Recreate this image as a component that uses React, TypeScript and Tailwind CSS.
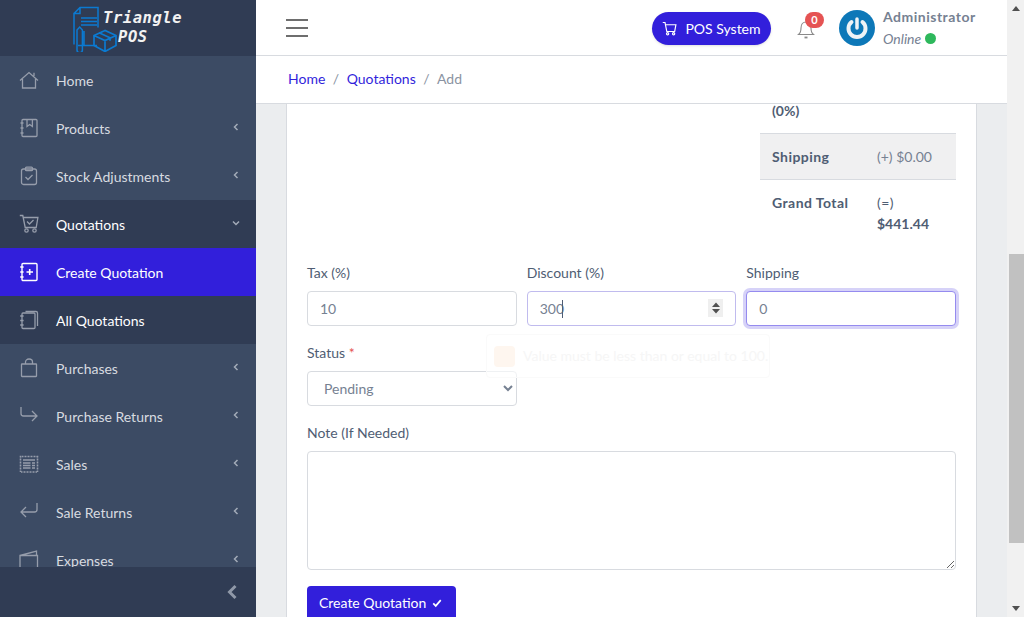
import React from "react";

const S = ({ children, className = "" }: { children: React.ReactNode; className?: string }) => (
  <svg viewBox="0 0 20 20" fill="none" stroke="currentColor" strokeWidth="1.3" className={"w-5 h-5 " + className}>
    {children}
  </svg>
);

const icons: Record<string, React.ReactNode> = {
  home: <S><path d="M1 10.500 10 2.500l9 8M3.500 9v9h13V9M15 6V2.800" /></S>,
  book: <S><rect x="3" y="1.500" width="15" height="17" rx="1" /><path d="M8 1.500v7l2.700-2 2.700 2v-7M1.500 5h3M1.500 10h3M1.500 15h3" /></S>,
  clip: <S><rect x="2.500" y="3" width="15" height="15.500" rx="2" /><rect x="6.500" y="1.200" width="7" height="3.500" rx="1" /><path d="m6.500 11 2.500 2.500 4.500-4.500" /></S>,
  cart: <S><path d="M.8 1.500h3l2.400 12h11l1.700-10H4.300" /><circle cx="7.500" cy="16.500" r="1.700" /><circle cx="15.500" cy="16.500" r="1.700" /><path d="m8 7.500 2.500 2.500 4-4" /></S>,
  plus: <S><rect x="3" y="1.500" width="15" height="17" rx="1" strokeWidth="1.400" /><path d="M7.500 10h6.500M10.700 7v6" strokeWidth="1.600" /><path d="M1.200 5h3.400M1.200 10h3.400M1.200 15h3.400" strokeWidth="1.600" /></S>,
  copies: <S><rect x="3" y="3" width="13" height="15.500" rx="1" /><path d="M6.500 1.500H17a1.500 1.500 0 0 1 1.500 1.500v13M1.200 6h3.400M1.200 10.500h3.400M1.200 15h3.400" /></S>,
  bag: <S><rect x="2.500" y="6" width="15" height="12.500" rx="0.500" /><path d="M6.500 6V4a3.500 3 0 0 1 7 0v2" /></S>,
  retR: <S><path d="M2 1v6.500a2.500 2.500 0 0 0 2.500 2.500H18M13 5l5 5-5 5" /></S>,
  news: <S><rect x="1.500" y="2.500" width="17" height="15.500" strokeWidth="1.600" strokeDasharray="1 .5" /><path d="M4 6h12M4 9h7.500M4 11.500h7.500M4 14h7.500M13 9h3M13 11.500h3M13 14h3" strokeWidth="1.400" /></S>,
  retL: <S><path d="M18 1v6.500a2.500 2.500 0 0 1-2.500 2.500H2M7 5l-5 5 5 5" /></S>,
  wallet: <S><path d="M1 5.500h17.500v14H1zM1 5.500 17.500 1.200v4" /></S>,
};

const Chevron = ({ down = false }: { down?: boolean }) => (
  <svg viewBox="0 0 10 10" className="w-[10px] h-[10px] text-[#a3abb8] mt-[-3px]" fill="none" stroke="currentColor" strokeWidth="1.500">
    {down ? <path d="m2 3.500 3 3 3-3" /> : <path d="M6.500 2 3.500 5l3 3" />}
  </svg>
);

const Item = ({ icon, label, chev, tone = "normal" }: { icon: string; label: string; chev?: "left" | "down"; tone?: "normal" | "open" | "active" }) => {
  const cls =
    tone === "active"
      ? "bg-[#321fdb] text-white"
      : tone === "open"
        ? "bg-[#303c54] text-white"
        : "text-[#d8dbe0]";
  const ic = tone === "active" ? "text-white" : "text-[#969dab]";
  return (
    <div className={"h-12 shrink-0 flex items-center pl-[19px] pr-[15px] " + cls}>
      <span className={"w-[37px] shrink-0 flex " + ic}>{icons[icon]}</span>
      <span className="flex-1 text-sm pt-[2px]">{label}</span>
      {chev && <Chevron down={chev === "down"} />}
    </div>
  );
};

const Logo = () => (
  <svg viewBox="0 0 46 46" className="w-[46px] h-[46px]" fill="none" stroke="#0b7ad1" strokeWidth="1.500">
    <path d="M2 7.500 8 1.500h18v20M8 1.500v6H2v31" />
    <path d="M9 12h16M9 15.500h16M9 19h16" />
    <path d="M6 39.500h19M12 39V25M5 38V24l2.700-3 2.700 3v20a2.700 2.700 0 0 1-5.400 0z" />
    <path d="M33 24.500l-11 5v10l11 6 11-6v-10zM22 29.500l11 5 11-5M33 34.500v11M27 26.800l11 5v3" strokeWidth="1.700" />
  </svg>
);

const Sidebar = () => (
  <aside className="w-[256px] shrink-0 h-full flex flex-col bg-[#3c4b64] overflow-hidden">
    <div className="h-14 shrink-0 bg-[#303c54] flex items-start">
      <div className="ml-[72px] mt-[6px] shrink-0"><Logo /></div>
      <div className="ml-[-16px] mt-[9px] text-[#f2f2f2] font-bold italic text-[15.500px] leading-[19px] tracking-[.55px] font-['DejaVu_Sans_Mono',monospace]">
        <div className="ml-[1px]">Triangle</div>
        <div className="ml-[16px]">POS</div>
      </div>
    </div>
    <nav className="flex-1 min-h-0 overflow-hidden">
      <Item icon="home" label="Home" />
      <Item icon="book" label="Products" chev="left" />
      <Item icon="clip" label="Stock Adjustments" chev="left" />
      <Item icon="cart" label="Quotations" chev="down" tone="open" />
      <Item icon="plus" label="Create Quotation" tone="active" />
      <Item icon="copies" label="All Quotations" tone="open" />
      <Item icon="bag" label="Purchases" chev="left" />
      <Item icon="retR" label="Purchase Returns" chev="left" />
      <Item icon="news" label="Sales" chev="left" />
      <Item icon="retL" label="Sale Returns" chev="left" />
      <Item icon="wallet" label="Expenses" chev="left" />
    </nav>
    <div className="h-[50px] shrink-0 bg-[#303c54] flex items-center justify-end pr-[17px]">
      <svg viewBox="0 0 14 16" className="w-[14px] h-4 text-[#8f98a8]" fill="none" stroke="currentColor" strokeWidth="3"><path d="M10.500 2 4.500 8l6 6" /></svg>
    </div>
  </aside>
);

const Topbar = () => (
  <header className="h-14 shrink-0 border-b border-[#d8dbe0] bg-white flex items-center pl-[30px] pr-[24px]">
    <div className="w-[22px] flex flex-col gap-[6px]">
      <span className="h-[2px] bg-[#6e6e6e]" /><span className="h-[2px] bg-[#6e6e6e]" /><span className="h-[2px] bg-[#6e6e6e]" />
    </div>
    <div className="flex-1" />
    <button className="h-[33px] w-[119px] mt-[2px] rounded-full bg-[#321fdb] text-white text-sm flex items-center justify-center gap-[8px] shadow-sm">
      <svg viewBox="0 0 20 20" className="w-[15px] h-[15px]" fill="none" stroke="currentColor" strokeWidth="1.600"><path d="M1 2h3l2.400 12h10.500L18.500 5H4.600" /><circle cx="7.500" cy="17" r="1.500" /><circle cx="15.500" cy="17" r="1.500" /></svg>
      POS System
    </button>
    <div className="relative ml-[26px] w-[18px] h-[22px] mt-[3px]">
      <svg viewBox="0 0 18 22" className="w-[18px] h-[22px] text-[#8a8a8a]" fill="none" stroke="currentColor" strokeWidth="1.100"><path d="M1.500 16.500c2-1.500 2.500-3 2.500-6.500 0-3.500 2-6 5-6s5 2.500 5 6c0 3.500.5 5 2.500 6.500z" /><path d="M7.500 19.500h3" strokeWidth="1.800" /></svg>
      <span className="absolute left-[8px] top-[-6px] w-[19px] h-4 rounded-full bg-[#e55353] text-white text-[11px] font-bold leading-4 text-center">0</span>
    </div>
    <div className="ml-[24px] w-9 h-9 rounded-full bg-[#0d78b8] flex items-center justify-center">
      <svg viewBox="0 0 36 36" className="w-9 h-9" fill="none" stroke="#eef3f6" strokeLinecap="round">
        <path d="M12.500 12a8.500 8.500 0 1 0 11 0" strokeWidth="4" />
        <path d="M18 9v9" strokeWidth="3.500" />
      </svg>
    </div>
    <div className="ml-[8px] w-[100px] text-[#768192] leading-[21px] text-sm">
      <div className="font-bold tracking-[.5px]">Administrator</div>
      <div className="italic flex items-center gap-[4px] mt-[1px]">Online <span className="w-[11px] h-[11px] rounded-full bg-[#2eb85c]" /></div>
    </div>
  </header>
);

const Crumbs = () => (
  <div className="h-12 shrink-0 border-b border-[#d8dbe0] bg-white flex items-center pl-[32px] pb-[2px] text-sm gap-[7.500px]">
    <span className="text-[#321fdb]">Home</span>
    <span className="text-[#8a93a2]">/</span>
    <span className="text-[#321fdb]">Quotations</span>
    <span className="text-[#8a93a2]">/</span>
    <span className="text-[#8a93a2]">Add</span>
  </div>
);

const inputBase = "w-full h-[35px] rounded border bg-white px-3 text-sm text-[#768192] outline-none";
const labelC = "block text-sm leading-[21px] mb-2 text-[#4f5d73]";

const Form = () => (
  <div className="px-5 text-[#4f5d73] text-sm">
    <div className="flex justify-end mt-[-4px]">
      <div className="w-[196px] leading-[21px]">
        <div className="pl-3 pb-3 font-bold">(0%)</div>
        <div className="flex p-3 bg-[#f0f0f1] border-y border-[#d8dbe0]">
          <span className="w-[105px] font-bold tracking-[.45px]">Shipping</span>
          <span className="text-[#768192]">(+) $0.00</span>
        </div>
        <div className="flex p-3">
          <span className="w-[105px] font-bold tracking-[.45px]">Grand Total</span>
          <span className="font-bold"><span className="font-normal tracking-[.5px]">(=)</span><br />$441.44</span>
        </div>
      </div>
    </div>
    <div className="grid grid-cols-3 gap-[10px] mt-4 relative">
      <div>
        <label className={labelC}>Tax (%)</label>
        <input readOnly defaultValue="10" className={inputBase + " border-[#d8dbe0]"} />
      </div>
      <div>
        <label className={labelC}>Discount (%)</label>
        <div className="relative">
          <input readOnly defaultValue="300" className={inputBase + " border-[#c0bbee]"} />
          <span className="absolute left-[35px] top-[9px] w-px h-[18px] bg-[#4f5d73]" />
          <span className="absolute right-[13px] top-[8px] w-[15px] h-[18px] bg-[#efefef] flex items-center justify-center">
            <svg viewBox="0 0 10 14" className="w-[10px] h-[14px] text-[#505050]" fill="currentColor"><path d="M5 1.500 9 6H1zM5 12.500 1 8h8z" /></svg>
          </span>
        </div>
      </div>
      <div>
        <label className={labelC}>Shipping</label>
        <input readOnly defaultValue="0" className={inputBase + " border-[#958bef] ring-[3px] ring-[#321fdb]/20"} />
      </div>
      <div className="absolute left-[179px] top-[72px] w-[284px] h-[44px] rounded border border-[#fafafa] bg-white/60 flex items-center gap-[8px] pl-[7px] text-[#f6f6f6] whitespace-nowrap text-sm z-10">
        <span className="w-[21px] h-[21px] bg-[#fef6ef] rounded-sm shrink-0" />
        Value must be less than or equal to 100.
      </div>
    </div>
    <div className="grid grid-cols-3 gap-[10px] mt-4">
      <div>
        <label className={labelC}>Status <span className="text-[#e55353]">*</span></label>
        <select defaultValue="Pending" className={inputBase + " border-[#d8dbe0] pl-3"}>
          <option>Pending</option>
        </select>
      </div>
    </div>
    <div className="mt-4">
      <label className={labelC}>Note (If Needed)</label>
      <textarea readOnly className="block w-full h-[119px] rounded border border-[#d8dbe0] bg-white outline-none" />
    </div>
    <button className="mt-4 h-[35px] w-[149px] pb-[2px] rounded bg-[#321fdb] text-white text-sm flex items-center pl-3 gap-[6px]">
      Create Quotation
      <svg viewBox="0 0 12 12" className="w-[10px] h-[10px]" fill="none" stroke="currentColor" strokeWidth="2"><path d="m1.500 6.500 3 3 6-7" /></svg>
    </button>
  </div>
);

const Scrollbar = () => (
  <div className="w-[17px] shrink-0 h-full bg-[#f1f1f1] flex flex-col">
    <div className="h-[17px] shrink-0 flex items-center justify-center">
      <svg viewBox="0 0 8 5" className="w-2 h-[5px] text-[#505050]" fill="currentColor"><path d="M4 0 8 5H0z" /></svg>
    </div>
    <div className="h-[237px] shrink-0" />
    <div className="h-[289px] shrink-0 ml-[2px] bg-[#c1c1c1]" />
    <div className="flex-1" />
    <div className="h-[17px] shrink-0 flex items-center justify-center">
      <svg viewBox="0 0 8 5" className="w-2 h-[5px] text-[#505050]" fill="currentColor"><path d="M0 0h8L4 5z" /></svg>
    </div>
  </div>
);

export default function App() {
  return (
    <div className="flex w-[1024px] h-[617px] overflow-hidden bg-[#ebedef] font-['Lato',sans-serif] text-[#4f5d73]">
      <Sidebar />
      <main className="flex-1 min-w-0 h-full flex flex-col">
        <Topbar />
        <Crumbs />
        <div className="flex-1 min-h-0 overflow-hidden px-[30px]">
          <div className="bg-white border-x border-[#d8dbe0] h-full overflow-hidden">
            <Form />
          </div>
        </div>
      </main>
      <Scrollbar />
    </div>
  );
}
